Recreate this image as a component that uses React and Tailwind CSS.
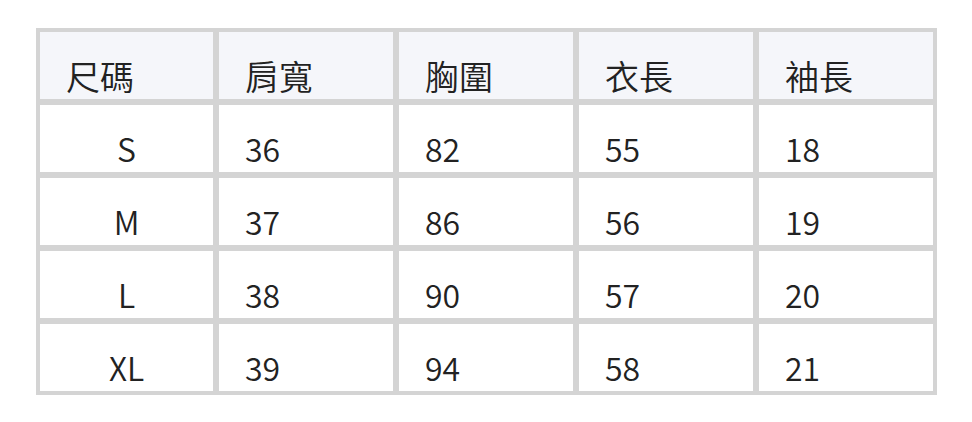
import React from "react";

const headers = ["尺碼", "肩寬", "胸圍", "衣長", "袖長"];

const rows = [
  ["S", "36", "82", "55", "18"],
  ["M", "37", "86", "56", "19"],
  ["L", "38", "90", "57", "20"],
  ["XL", "39", "94", "58", "21"],
];

export default function App() {
  return (
    <div
      className="w-[972px] h-[422px] bg-white pl-[36px] pt-[28px] text-[#222222] font-[350]"
      style={{ fontFamily: '"Noto Sans CJK TC", "Noto Sans", sans-serif' }}
    >
      <div className="w-[901px] grid grid-cols-[173px_174px_174px_174px_174px] gap-[6px] p-[4px] bg-[#d4d4d4]">
        {headers.map((h) => (
          <div
            key={h}
            className="h-[67px] bg-[#f5f6fa] pl-[26px] pt-[27px] text-[34px] leading-[34px]"
          >
            {h}
          </div>
        ))}
        {rows.map((r) =>
          r.map((cell, i) => (
            <div
              key={r[0] + i}
              className={
                "h-[67px] bg-white pt-[27px] text-[32px] leading-[32px] " +
                (i === 0 ? "text-center" : "pl-[26px]")
              }
            >
              {cell}
            </div>
          ))
        )}
      </div>
    </div>
  );
}
